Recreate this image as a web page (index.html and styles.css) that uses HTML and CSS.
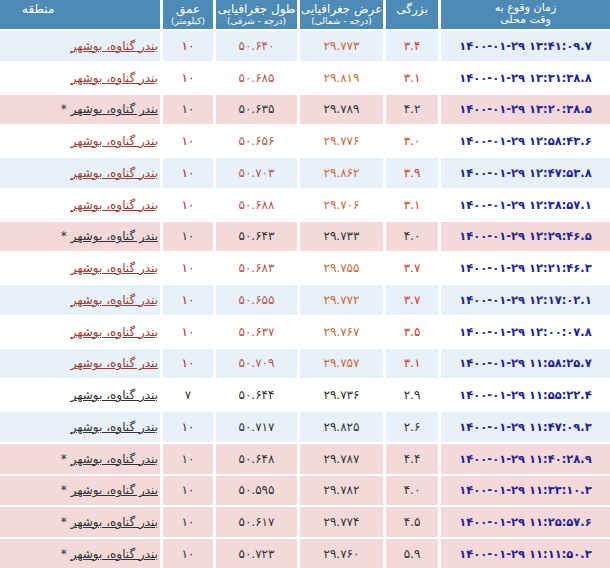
FILE: index.html
```html
<!DOCTYPE html>
<html lang="fa" dir="rtl">
<head>
<meta charset="utf-8">
<title>زمین‌لرزه‌ها</title>
<link rel="stylesheet" href="styles.css">
</head>
<body>
<table class="quakes">
  <colgroup>
    <col class="c-time"><col class="c-mag"><col class="c-lat"><col class="c-lon"><col class="c-depth"><col class="c-region">
  </colgroup>
  <thead>
    <tr>
      <th class="h-time"><span class="line">زمان وقوع به</span><span class="line">وقت محلی</span></th>
      <th>بزرگی</th>
      <th>عرض جغرافیایی<span class="sub">(درجه - شمالی)</span></th>
      <th>طول جغرافیایی<span class="sub">(درجه - شرقی)</span></th>
      <th>عمق<span class="sub">(کیلومتر)</span></th>
      <th class="h-region">منطقه</th>
    </tr>
  </thead>
  <tbody>
    <tr class="blue red"><td class="time"><span dir="ltr">۱۴۰۰-۰۱-۲۹ ۱۳:۴۱:۰۹.۷</span></td><td class="mag">۳.۴</td><td class="lat">۲۹.۷۷۳</td><td class="lon">۵۰.۶۴۰</td><td class="depth">۱۰</td><td class="region"><a>بندر گناوه، بوشهر</a></td></tr>
    <tr class="white red"><td class="time"><span dir="ltr">۱۴۰۰-۰۱-۲۹ ۱۳:۳۱:۳۸.۸</span></td><td class="mag">۳.۱</td><td class="lat">۲۹.۸۱۹</td><td class="lon">۵۰.۶۸۵</td><td class="depth">۱۰</td><td class="region"><a>بندر گناوه، بوشهر</a></td></tr>
    <tr class="pink"><td class="time"><span dir="ltr">۱۴۰۰-۰۱-۲۹ ۱۳:۲۰:۳۸.۵</span></td><td class="mag">۴.۲</td><td class="lat">۲۹.۷۸۹</td><td class="lon">۵۰.۶۳۵</td><td class="depth">۱۰</td><td class="region"><a>بندر گناوه، بوشهر</a> *</td></tr>
    <tr class="white red"><td class="time"><span dir="ltr">۱۴۰۰-۰۱-۲۹ ۱۲:۵۸:۴۳.۶</span></td><td class="mag">۳.۰</td><td class="lat">۲۹.۷۷۶</td><td class="lon">۵۰.۶۵۶</td><td class="depth">۱۰</td><td class="region"><a>بندر گناوه، بوشهر</a></td></tr>
    <tr class="blue red"><td class="time"><span dir="ltr">۱۴۰۰-۰۱-۲۹ ۱۲:۴۷:۵۳.۸</span></td><td class="mag">۳.۹</td><td class="lat">۲۹.۸۶۲</td><td class="lon">۵۰.۷۰۳</td><td class="depth">۱۰</td><td class="region"><a>بندر گناوه، بوشهر</a></td></tr>
    <tr class="white red"><td class="time"><span dir="ltr">۱۴۰۰-۰۱-۲۹ ۱۲:۳۸:۵۷.۱</span></td><td class="mag">۳.۱</td><td class="lat">۲۹.۷۰۶</td><td class="lon">۵۰.۶۸۸</td><td class="depth">۱۰</td><td class="region"><a>بندر گناوه، بوشهر</a></td></tr>
    <tr class="pink"><td class="time"><span dir="ltr">۱۴۰۰-۰۱-۲۹ ۱۲:۲۹:۴۶.۵</span></td><td class="mag">۴.۰</td><td class="lat">۲۹.۷۳۳</td><td class="lon">۵۰.۶۴۳</td><td class="depth">۱۰</td><td class="region"><a>بندر گناوه، بوشهر</a> *</td></tr>
    <tr class="white red"><td class="time"><span dir="ltr">۱۴۰۰-۰۱-۲۹ ۱۲:۲۱:۴۶.۳</span></td><td class="mag">۳.۷</td><td class="lat">۲۹.۷۵۵</td><td class="lon">۵۰.۶۸۳</td><td class="depth">۱۰</td><td class="region"><a>بندر گناوه، بوشهر</a></td></tr>
    <tr class="blue red"><td class="time"><span dir="ltr">۱۴۰۰-۰۱-۲۹ ۱۲:۱۷:۰۲.۱</span></td><td class="mag">۳.۷</td><td class="lat">۲۹.۷۷۲</td><td class="lon">۵۰.۶۵۵</td><td class="depth">۱۰</td><td class="region"><a>بندر گناوه، بوشهر</a></td></tr>
    <tr class="white red"><td class="time"><span dir="ltr">۱۴۰۰-۰۱-۲۹ ۱۲:۰۰:۰۷.۸</span></td><td class="mag">۳.۵</td><td class="lat">۲۹.۷۶۷</td><td class="lon">۵۰.۶۳۷</td><td class="depth">۱۰</td><td class="region"><a>بندر گناوه، بوشهر</a></td></tr>
    <tr class="blue red"><td class="time"><span dir="ltr">۱۴۰۰-۰۱-۲۹ ۱۱:۵۸:۲۵.۷</span></td><td class="mag">۳.۱</td><td class="lat">۲۹.۷۵۷</td><td class="lon">۵۰.۷۰۹</td><td class="depth">۱۰</td><td class="region"><a>بندر گناوه، بوشهر</a></td></tr>
    <tr class="white"><td class="time"><span dir="ltr">۱۴۰۰-۰۱-۲۹ ۱۱:۵۵:۲۲.۴</span></td><td class="mag">۲.۹</td><td class="lat">۲۹.۷۳۶</td><td class="lon">۵۰.۶۴۴</td><td class="depth">۷</td><td class="region"><a>بندر گناوه، بوشهر</a></td></tr>
    <tr class="blue"><td class="time"><span dir="ltr">۱۴۰۰-۰۱-۲۹ ۱۱:۴۷:۰۹.۳</span></td><td class="mag">۲.۶</td><td class="lat">۲۹.۸۲۵</td><td class="lon">۵۰.۷۱۷</td><td class="depth">۱۰</td><td class="region"><a>بندر گناوه، بوشهر</a></td></tr>
    <tr class="pink"><td class="time"><span dir="ltr">۱۴۰۰-۰۱-۲۹ ۱۱:۴۰:۲۸.۹</span></td><td class="mag">۴.۴</td><td class="lat">۲۹.۷۸۷</td><td class="lon">۵۰.۶۴۸</td><td class="depth">۱۰</td><td class="region"><a>بندر گناوه، بوشهر</a> *</td></tr>
    <tr class="pink"><td class="time"><span dir="ltr">۱۴۰۰-۰۱-۲۹ ۱۱:۳۳:۱۰.۳</span></td><td class="mag">۴.۰</td><td class="lat">۲۹.۷۸۲</td><td class="lon">۵۰.۵۹۵</td><td class="depth">۱۰</td><td class="region"><a>بندر گناوه، بوشهر</a> *</td></tr>
    <tr class="pink"><td class="time"><span dir="ltr">۱۴۰۰-۰۱-۲۹ ۱۱:۲۵:۵۷.۶</span></td><td class="mag">۴.۵</td><td class="lat">۲۹.۷۷۴</td><td class="lon">۵۰.۶۱۷</td><td class="depth">۱۰</td><td class="region"><a>بندر گناوه، بوشهر</a> *</td></tr>
    <tr class="pink"><td class="time"><span dir="ltr">۱۴۰۰-۰۱-۲۹ ۱۱:۱۱:۵۰.۳</span></td><td class="mag">۵.۹</td><td class="lat">۲۹.۷۶۰</td><td class="lon">۵۰.۷۲۳</td><td class="depth">۱۰</td><td class="region"><a>بندر گناوه، بوشهر</a> *</td></tr>
  </tbody>
</table>
</body>
</html>
```
FILE: styles.css
```css
html, body {
  margin: 0;
  padding: 0;
  background: #ffffff;
  overflow: hidden;
}
body {
  font-family: "DejaVu Sans", sans-serif;
  font-size: 12px;
  color: #333333;
}
.quakes {
  direction: rtl;
  table-layout: fixed;
  border-collapse: separate;
  border-spacing: 3px 2px;
  width: 616px;
  margin: -2px -3px 0 0;
}
.c-time { width: 169px; }
.c-mag { width: 52px; }
.c-lat { width: 83px; }
.c-lon { width: 81px; }
.c-depth { width: 50px; }
.c-region { width: 160px; }

.quakes th {
  background: #4d8ab5;
  color: #ffffff;
  font-weight: normal;
  font-size: 12px;
  line-height: 12px;
  height: 29px;
  padding: 3px 0 0 0;
  box-sizing: border-box;
  vertical-align: top;
  text-align: center;
  overflow: hidden;
}
.quakes th.h-time {
  padding-top: 2px;
  font-size: 11px;
}
.quakes th.h-time .line {
  display: block;
  height: 12px;
  line-height: 12px;
}
.quakes th .sub {
  display: block;
  font-size: 9px;
  line-height: 10px;
  margin-top: 1px;
}
.quakes th.h-region {
  text-align: left;
  padding-left: 22px;
}

.quakes td {
  height: 29.75px;
  padding: 0 2px;
  box-sizing: border-box;
  text-align: center;
  vertical-align: middle;
  white-space: nowrap;
}
.quakes td.region {
  text-align: right;
  padding-right: 2px;
  font-size: 12px;
}
.quakes td.region a {
  color: inherit;
  text-decoration: underline;
  text-decoration-thickness: 1px;
}
.quakes td.time {
  font-weight: bold;
  font-size: 11.5px;
}
.quakes td.time span {
  unicode-bidi: embed;
}

tr.blue td { background: #e8f0fa; }
tr.white td { background: #ffffff; }
tr.pink td { background: #f3d9da; }

.quakes tbody td { color: #333333; }
.quakes tbody td.time { color: #23239a; }

tr.red td.mag { color: #d23a2e; }
tr.red td.lat { color: #cc6a36; }
tr.red td.lon { color: #b5574e; }
tr.red td.depth { color: #a3202a; }
tr.red td.region { color: #9e3d33; }
```
